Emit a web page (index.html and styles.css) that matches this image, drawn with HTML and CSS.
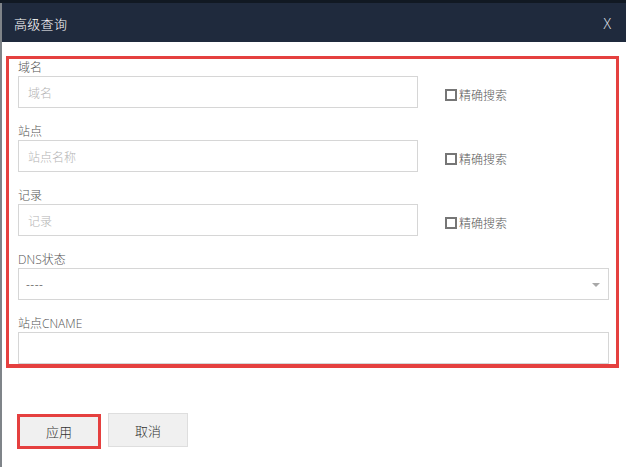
FILE: index.html
```html
<!DOCTYPE html>
<html lang="zh">
<head>
<meta charset="utf-8">
<title>高级查询</title>
<link rel="stylesheet" href="styles.css">
</head>
<body>
<div class="topstrip"></div>
<div class="modal">
  <div class="header">
    <span class="title">高级查询</span>
    <span class="close">X</span>
  </div>
  <div class="panel">
    <div class="group">
      <div class="label">域名</div>
      <div class="row">
        <input class="input short" type="text" placeholder="域名">
        <label class="check"><span class="box"></span><span>精确搜索</span></label>
      </div>
    </div>
    <div class="group">
      <div class="label">站点</div>
      <div class="row">
        <input class="input short" type="text" placeholder="站点名称">
        <label class="check"><span class="box"></span><span>精确搜索</span></label>
      </div>
    </div>
    <div class="group">
      <div class="label">记录</div>
      <div class="row">
        <input class="input short" type="text" placeholder="记录">
        <label class="check"><span class="box"></span><span>精确搜索</span></label>
      </div>
    </div>
    <div class="group">
      <div class="label">DNS状态</div>
      <div class="row">
        <div class="select"><span class="sel-text">----</span><span class="arrow"></span></div>
      </div>
    </div>
    <div class="group last">
      <div class="label">站点CNAME</div>
      <div class="row">
        <input class="input full" type="text">
      </div>
    </div>
  </div>
  <div class="actions">
    <button class="btn apply" type="button">应用</button>
    <button class="btn cancel" type="button">取消</button>
  </div>
</div>
</body>
</html>
```

FILE: styles.css
```css
* { box-sizing: border-box; }
html, body {
  margin: 0;
  padding: 0;
  height: 100%;
}
body {
  background: #7f8489;
  font-family: "Open Sans", "Noto Sans CJK SC", sans-serif;
  font-weight: 300;
  overflow: hidden;
}
.topstrip {
  height: 3px;
  background: #111923;
}
.modal {
  margin-left: 2px;
  height: 464px;
  background: #ffffff;
}
.header {
  height: 39px;
  background: #1f2a3d;
  display: flex;
  align-items: center;
  justify-content: space-between;
  padding: 1px 15px 0 12px;
  color: #ffffff;
}
.title {
  font-size: 13px;
  font-family: "Noto Sans CJK SC", sans-serif;
  font-weight: 300;
  letter-spacing: 0.3px;
}
.close {
  font-family: "Open Sans", sans-serif;
  font-weight: 300;
  font-size: 14px;
  color: #e8ecf2;
}
.panel {
  margin: 14px 7px 0 4px;
  border: 3px solid #e5403f;
  border-bottom-width: 4px;
  padding: 1px 7px 0 9px;
}
.group { margin-bottom: 16px; }
.group.last { margin-bottom: 0; }
.label {
  height: 16px;
  line-height: 16px;
  font-size: 12px;
  color: #555;
  font-family: "Open Sans", "Noto Sans CJK SC", sans-serif;
  font-weight: 300;
}
.row {
  display: flex;
  align-items: center;
}
.input {
  height: 32px;
  border: 1px solid #d6d6d6;
  padding: 0 9px;
  font-size: 12px;
  font-family: "Noto Sans CJK SC", sans-serif;
  font-weight: 300;
  color: #333;
  outline: none;
  background: #fff;
}
.input::placeholder { color: #b4b4b4; }
.short { width: 400px; }
.full { flex: 1; }
.check {
  display: flex;
  align-items: center;
  margin-left: 27px;
  padding-top: 5px;
  font-size: 12px;
  color: #5a5a5a;
  font-family: "Noto Sans CJK SC", sans-serif;
  font-weight: 300;
}
.box {
  width: 12px;
  height: 12px;
  border: 2px solid #767676;
  margin-right: 2px;
  background: #fff;
}
.select {
  flex: 1;
  height: 32px;
  border: 1px solid #d6d6d6;
  display: flex;
  align-items: center;
  justify-content: space-between;
  padding: 0 8px 0 7px;
  font-size: 12px;
  color: #333;
}
.sel-text { letter-spacing: 0.5px; }
.arrow {
  width: 0;
  height: 0;
  border-left: 4px solid transparent;
  border-right: 4px solid transparent;
  border-top: 4px solid #a8a8a8;
  margin-top: 1px;
}
.actions {
  display: flex;
  align-items: flex-start;
  padding-left: 15px;
  margin-top: 45px;
}
.btn {
  font-family: "Noto Sans CJK SC", sans-serif;
  font-weight: 300;
  font-size: 13px;
  color: #333;
  background: #f0f0f0;
  cursor: pointer;
  padding: 0;
}
.apply {
  width: 84px;
  height: 35px;
  border: 3px solid #e5403f;
  margin-top: 1px;
}
.cancel {
  width: 80px;
  height: 34px;
  border: 1px solid #dedede;
  margin-left: 7px;
}
```
